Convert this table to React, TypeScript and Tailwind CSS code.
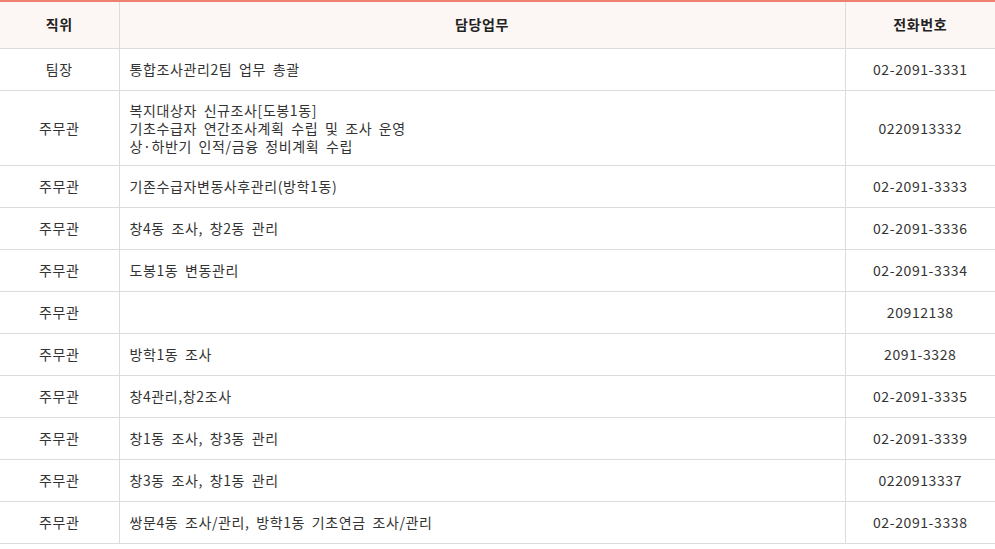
const rows: { pos: string; work: string[]; tel: string }[] = [
  { pos: "팀장", work: ["통합조사관리2팀 업무 총괄"], tel: "02-2091-3331" },
  {
    pos: "주무관",
    work: ["복지대상자 신규조사[도봉1동]", "기초수급자 연간조사계획 수립 및 조사 운영", "상·하반기 인적/금융 정비계획 수립"],
    tel: "0220913332",
  },
  { pos: "주무관", work: ["기존수급자변동사후관리(방학1동)"], tel: "02-2091-3333" },
  { pos: "주무관", work: ["창4동 조사, 창2동 관리"], tel: "02-2091-3336" },
  { pos: "주무관", work: ["도봉1동 변동관리"], tel: "02-2091-3334" },
  { pos: "주무관", work: [], tel: "20912138" },
  { pos: "주무관", work: ["방학1동 조사"], tel: "2091-3328" },
  { pos: "주무관", work: ["창4관리,창2조사"], tel: "02-2091-3335" },
  { pos: "주무관", work: ["창1동 조사, 창3동 관리"], tel: "02-2091-3339" },
  { pos: "주무관", work: ["창3동 조사, 창1동 관리"], tel: "0220913337" },
  { pos: "주무관", work: ["쌍문4동 조사/관리, 방학1동 기초연금 조사/관리"], tel: "02-2091-3338" },
]

export default function App() {
  return (
    <div className="w-[995px] bg-white font-['Noto_Sans_CJK_KR','Noto_Sans',sans-serif] text-[14px] tracking-[0.6px] [word-spacing:3px] text-[#333]">
      <table className="w-full table-fixed border-collapse border-t-2 border-[#ef7f6e]">
        <colgroup>
          <col className="w-[119px]" />
          <col className="w-[726px]" />
          <col />
        </colgroup>
        <thead>
          <tr className="h-[47px] bg-[#fcf7f5] border-b border-[#dcdcdc]">
            <th className="border-r border-[#dcdcdc] font-bold text-[#222]">직위</th>
            <th className="border-r border-[#dcdcdc] font-bold text-[#222]">담당업무</th>
            <th className="font-bold text-[#222]">전화번호</th>
          </tr>
        </thead>
        <tbody>
          {rows.map((r, i) => (
            <tr key={i} className="h-[42px] border-b border-[#dcdcdc]">
              <td className="border-r border-[#dcdcdc] text-center leading-[18px]">{r.pos}</td>
              <td className="border-r border-[#dcdcdc] px-[10px] py-[10px] leading-[18px]">
                {r.work.map((w, j) => (
                  <div key={j}>{w}</div>
                ))}
              </td>
              <td className="text-center leading-[18px]">{r.tel}</td>
            </tr>
          ))}
        </tbody>
      </table>
    </div>
  )
}
